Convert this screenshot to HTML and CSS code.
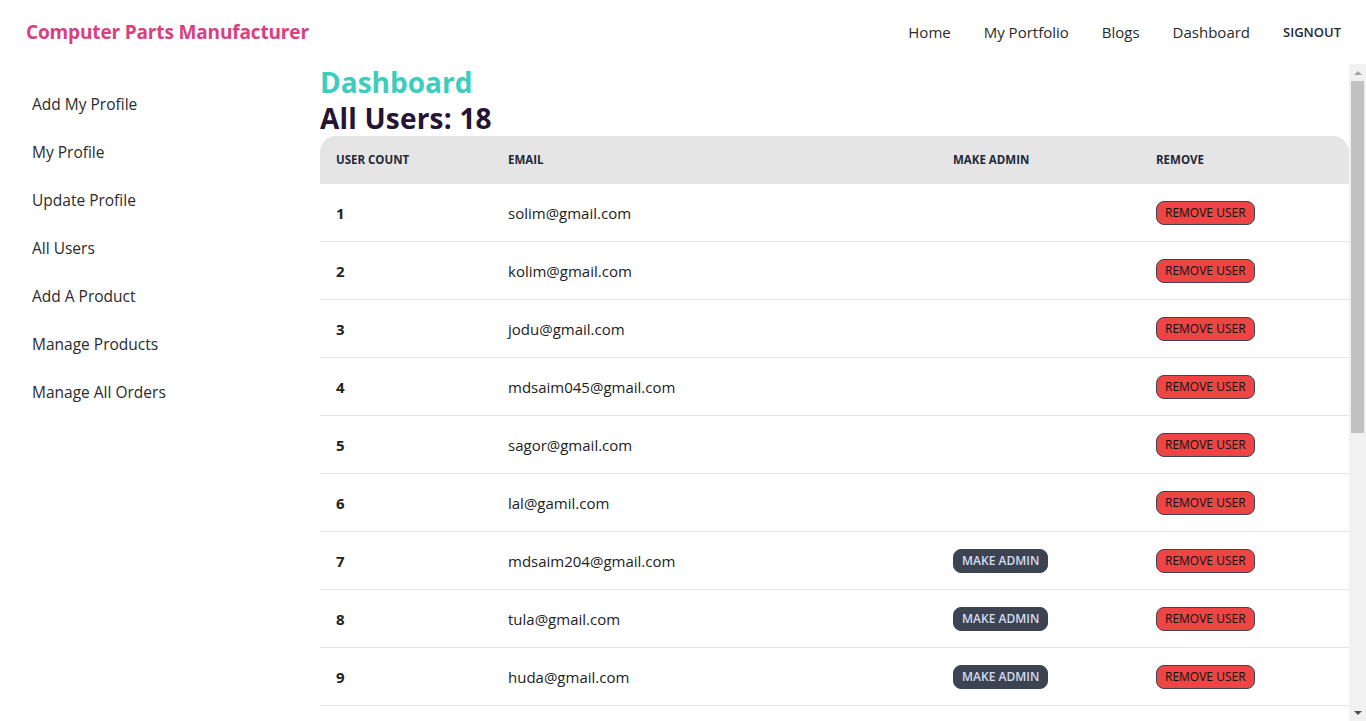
FILE: index.html
```html
<!DOCTYPE html>
<html lang="en">
<head>
<meta charset="utf-8">
<title>Computer Parts Manufacturer - Dashboard</title>
<link rel="stylesheet" href="styles.css">
</head>
<body>
<header class="navbar">
  <a class="brand" href="#">Computer Parts Manufacturer</a>
  <nav class="nav-links">
    <a href="#">Home</a>
    <a href="#">My Portfolio</a>
    <a href="#">Blogs</a>
    <a href="#">Dashboard</a>
    <button class="signout">SIGNOUT</button>
  </nav>
</header>
<div class="layout">
  <aside class="sidebar">
    <ul class="menu">
      <li><a href="#">Add My Profile</a></li>
      <li><a href="#">My Profile</a></li>
      <li><a href="#">Update Profile</a></li>
      <li><a href="#">All Users</a></li>
      <li><a href="#">Add A Product</a></li>
      <li><a href="#">Manage Products</a></li>
      <li><a href="#">Manage All Orders</a></li>
    </ul>
  </aside>
  <main class="main">
    <h2 class="title">Dashboard</h2>
    <h2 class="subtitle">All Users: 18</h2>
    <table class="users">
      <thead>
        <tr><th class="h1">User Count</th><th class="h2">Email</th><th class="h3">Make Admin</th><th class="h4">Remove</th></tr>
      </thead>
      <tbody>
        <tr><th>1</th><td>solim@gmail.com</td><td></td><td><button class="btn-remove">Remove User</button></td></tr>
        <tr><th>2</th><td>kolim@gmail.com</td><td></td><td><button class="btn-remove">Remove User</button></td></tr>
        <tr><th>3</th><td>jodu@gmail.com</td><td></td><td><button class="btn-remove">Remove User</button></td></tr>
        <tr><th>4</th><td>mdsaim045@gmail.com</td><td></td><td><button class="btn-remove">Remove User</button></td></tr>
        <tr><th>5</th><td>sagor@gmail.com</td><td></td><td><button class="btn-remove">Remove User</button></td></tr>
        <tr><th>6</th><td>lal@gamil.com</td><td></td><td><button class="btn-remove">Remove User</button></td></tr>
        <tr><th>7</th><td>mdsaim204@gmail.com</td><td><button class="btn-admin">Make Admin</button></td><td><button class="btn-remove">Remove User</button></td></tr>
        <tr><th>8</th><td>tula@gmail.com</td><td><button class="btn-admin">Make Admin</button></td><td><button class="btn-remove">Remove User</button></td></tr>
        <tr><th>9</th><td>huda@gmail.com</td><td><button class="btn-admin">Make Admin</button></td><td><button class="btn-remove">Remove User</button></td></tr>
        <tr><th>10</th><td>rahim@gmail.com</td><td><button class="btn-admin">Make Admin</button></td><td><button class="btn-remove">Remove User</button></td></tr>
        <tr><th>11</th><td>karim@gmail.com</td><td><button class="btn-admin">Make Admin</button></td><td><button class="btn-remove">Remove User</button></td></tr>
        <tr><th>12</th><td>babu@gmail.com</td><td><button class="btn-admin">Make Admin</button></td><td><button class="btn-remove">Remove User</button></td></tr>
        <tr><th>13</th><td>rana@gmail.com</td><td><button class="btn-admin">Make Admin</button></td><td><button class="btn-remove">Remove User</button></td></tr>
        <tr><th>14</th><td>sumon@gmail.com</td><td><button class="btn-admin">Make Admin</button></td><td><button class="btn-remove">Remove User</button></td></tr>
        <tr><th>15</th><td>polash@gmail.com</td><td><button class="btn-admin">Make Admin</button></td><td><button class="btn-remove">Remove User</button></td></tr>
        <tr><th>16</th><td>jamal@gmail.com</td><td><button class="btn-admin">Make Admin</button></td><td><button class="btn-remove">Remove User</button></td></tr>
        <tr><th>17</th><td>kamal@gmail.com</td><td><button class="btn-admin">Make Admin</button></td><td><button class="btn-remove">Remove User</button></td></tr>
        <tr><th>18</th><td>nayeem@gmail.com</td><td><button class="btn-admin">Make Admin</button></td><td><button class="btn-remove">Remove User</button></td></tr>
      </tbody>
    </table>
  </main>
  <div class="scrollbar" aria-hidden="true">
    <span class="sb-btn"><i class="arrow-up"></i></span>
    <span class="sb-track"><span class="sb-thumb"></span></span>
    <span class="sb-btn"><i class="arrow-down"></i></span>
  </div>
</div>
</body>
</html>
```
FILE: styles.css
```css
* { box-sizing: border-box; }
html, body {
  margin: 0;
  height: 100%;
  overflow: hidden;
  background: #ffffff;
  font-family: "Open Sans", "Noto Sans", sans-serif;
  color: #1f2937;
}
a { color: inherit; text-decoration: none; }

.navbar {
  height: 64px;
  display: flex;
  align-items: center;
  justify-content: space-between;
  padding: 0 25px 0 26px;
}
.brand {
  font-size: 19px;
  font-weight: 700;
  color: #d9407f;
  letter-spacing: -0.15px;
}
.nav-links {
  display: flex;
  align-items: center;
  gap: 33px;
  font-size: 15px;
  color: #2a2a2a;
}
.signout {
  border: 0;
  background: none;
  padding: 0;
  font-family: inherit;
  font-size: 13px;
  font-weight: 600;
  color: #1f2937;
  cursor: pointer;
}

.layout {
  display: flex;
  height: 657px;
}
.sidebar {
  width: 320px;
  flex: none;
  padding: 16px;
}
.menu {
  list-style: none;
  margin: 0;
  padding: 0;
}
.menu a {
  display: block;
  padding: 12px 16px;
  line-height: 24px;
  font-size: 15.5px;
  color: #2b2b2b;
}

.main {
  flex: 1;
  min-width: 0;
  overflow: hidden;
  height: 657px;
}

.scrollbar {
  width: 17px;
  flex: none;
  background: #f1f1f1;
  display: flex;
  flex-direction: column;
}
.sb-btn {
  height: 17px;
  flex: none;
  display: flex;
  align-items: center;
  justify-content: center;
}
.arrow-up {
  width: 0; height: 0;
  border-left: 4px solid transparent;
  border-right: 4px solid transparent;
  border-bottom: 4px solid #a3a3a3;
}
.arrow-down {
  width: 0; height: 0;
  border-left: 4px solid transparent;
  border-right: 4px solid transparent;
  border-top: 4px solid #505050;
}
.sb-track {
  flex: 1;
  padding: 0 2px;
}
.sb-thumb {
  display: block;
  height: 352px;
  background: #c1c1c1;
}

.title, .subtitle {
  margin: 0;
  font-size: 28px;
  line-height: 36px;
  font-weight: 700;
}
.title { color: #3ccdbd; }
.subtitle { color: #241533; letter-spacing: 0.2px; }

.users {
  width: 100%;
  table-layout: fixed;
  border-collapse: separate;
  border-spacing: 0;
  font-size: 15px;
}
.users thead th {
  background: #e5e5e5;
  font-size: 11.5px;
  font-weight: 700;
  text-transform: uppercase;
  text-align: left;
  color: #1f2937;
  padding: 16px;
  line-height: 16px;
}
.users thead th.h1 { width: 172px; border-top-left-radius: 16px; }
.users thead th.h2 { width: 445px; }
.users thead th.h3 { width: 203px; }
.users thead th.h4 { border-top-right-radius: 16px; }
.users tbody th,
.users tbody td {
  text-align: left;
  padding: 0 16px;
  height: 58px;
  border-bottom: 1px solid #e5e5e5;
  vertical-align: middle;
  color: #222;
}
.users tbody th { font-weight: 700; }

.btn-admin,
.btn-remove {
  height: 24px;
  padding: 0 8px;
  border-radius: 8px;
  font-family: inherit;
  font-size: 12px;
  font-weight: 600;
  text-transform: uppercase;
  cursor: pointer;
  vertical-align: middle;
}
.btn-admin {
  background: #3d4451;
  color: #d3dcf2;
  border: 1px solid #3d4451;
}
.btn-remove {
  background: #ef4444;
  color: #111;
  border: 1px solid #3d4451;
  font-weight: 500;
}
```
